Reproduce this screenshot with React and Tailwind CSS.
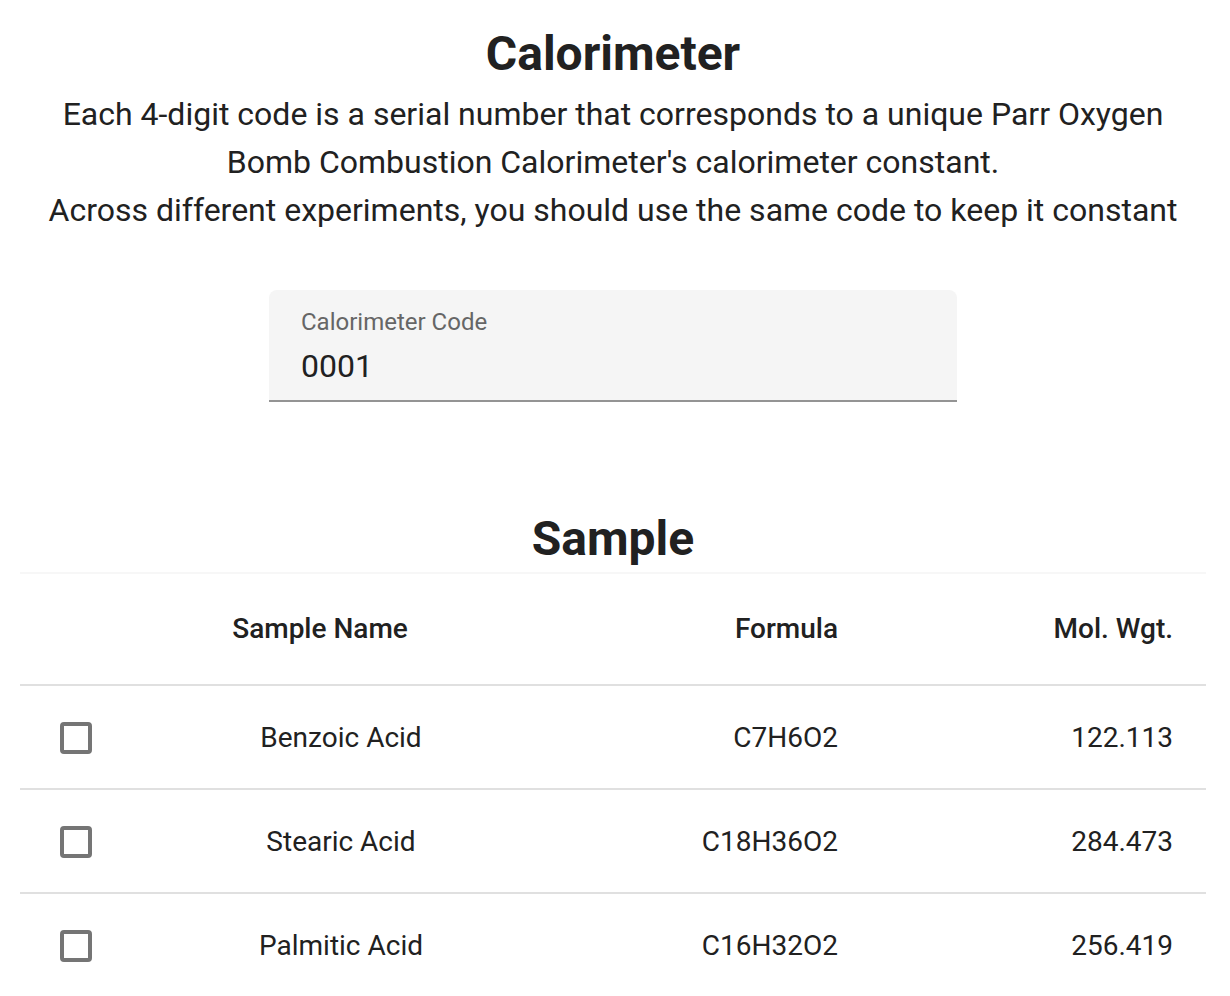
const samples = [
  { name: 'Benzoic Acid', formula: 'C7H6O2', weight: '122.113' },
  { name: 'Stearic Acid', formula: 'C18H36O2', weight: '284.473' },
  { name: 'Palmitic Acid', formula: 'C16H32O2', weight: '256.419' },
];

function Checkbox() {
  return (
    <div className="h-[32px] w-[32px] rounded-[4px] border-[4px] border-[#757575] bg-white" />
  );
}

export default function App() {
  return (
    <div className="min-h-[996px] w-[1226px] bg-white text-[#212121] font-['Roboto',sans-serif]">
      <h1 className="pt-[22px] text-center text-[48px] font-bold leading-[64px]">Calorimeter</h1>
      <p className="mt-[4px] text-center text-[32px] leading-[48px]">
        Each 4-digit code is a serial number that corresponds to a unique Parr Oxygen
        <br />
        Bomb Combustion Calorimeter's calorimeter constant.
        <br />
        Across different experiments, you should use the same code to keep it constant
      </p>

      {/* calorimeter code field */}
      <div className="mx-auto mt-[56px] flex h-[112px] w-[688px] flex-col rounded-t-[8px] border-b-2 border-[#949494] bg-[#f5f5f5] px-[32px] pt-[16px]">
        <label className="text-[24px] leading-[32px] text-[#666666]">Calorimeter Code</label>
        <div className="mt-[8px] text-[32px] leading-[40px] text-[#212121]">0001</div>
      </div>

      <h2 className="mt-[105px] text-center text-[48px] font-bold leading-[64px]">Sample</h2>

      <div className="ml-[20px] mt-[1px] w-[1186px] border-t-2 border-[#f7f7f7]">
        <div className="grid h-[112px] grid-cols-[122px_398px_330px_336px] items-center border-b-2 border-[#e0e0e0] text-[28px] font-medium leading-[40px]">
          <div />
          <div className="pr-[42px] text-center">Sample Name</div>
          <div className="pr-[32px] text-right">Formula</div>
          <div className="pr-[33px] text-right">Mol. Wgt.</div>
        </div>
        {samples.map((s) => (
          <div
            key={s.name}
            className="grid h-[104px] grid-cols-[122px_398px_330px_336px] items-center border-b-2 border-[#e0e0e0] pt-[2px] text-[28px] leading-[40px]"
          >
            <div className="pl-[40px]">
              <Checkbox />
            </div>
            <div className="text-center">{s.name}</div>
            <div className="pr-[32px] text-right">{s.formula}</div>
            <div className="pr-[33px] text-right">{s.weight}</div>
          </div>
        ))}
      </div>
    </div>
  );
}
